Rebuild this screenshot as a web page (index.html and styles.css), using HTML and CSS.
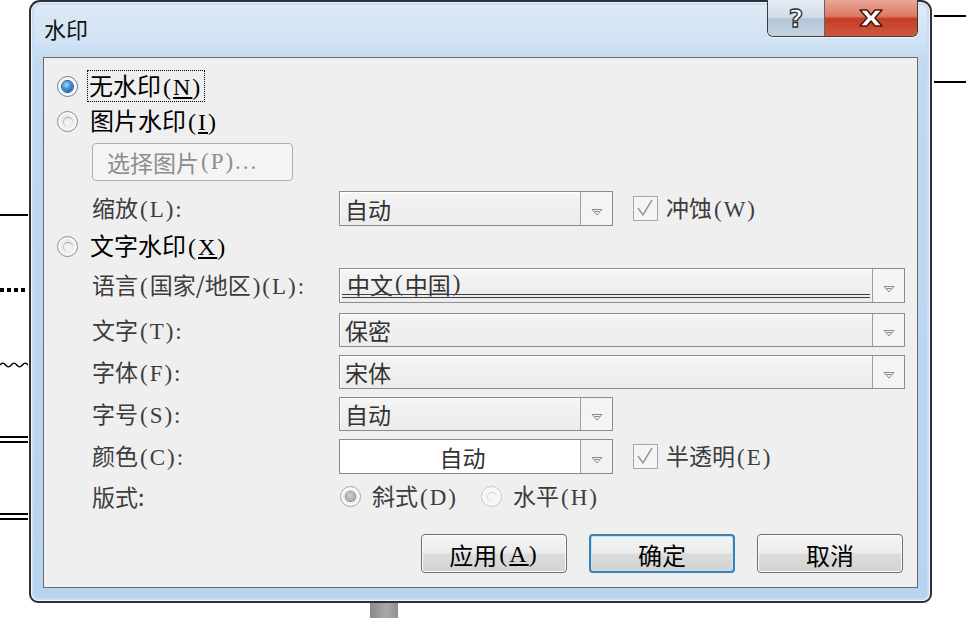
FILE: index.html
```html
<!DOCTYPE html>
<html lang="zh-CN">
<head>
<meta charset="utf-8">
<title>水印</title>
<link rel="stylesheet" href="styles.css">
</head>
<body>
<div class="desk">
  <div class="deco deco-solid" style="top:214px"></div>
  <div class="deco deco-dots"></div>
  <svg class="deco deco-wave" width="30" height="10" viewBox="0 0 30 10"><path d="M0 5 Q3 1 6 5 T12 5 T18 5 T24 5 T30 5" fill="none" stroke="#000" stroke-width="1.5"/></svg>
  <div class="deco deco-double" style="top:436px"></div>
  <div class="deco deco-double" style="top:513px"></div>
  <div class="deco-r" style="top:15px"></div>
  <div class="deco-r" style="top:81px"></div>
  <div class="grey-bar"></div>

  <div class="win">
    <div class="titlebar"><span class="title">水印</span></div>
    <div class="caps">
      <div class="cap help"><span class="q">?</span></div>
      <div class="cap close">
        <svg width="30" height="22" viewBox="0 0 30 22"><path d="M4 3 L11 3 L15 8 L19 3 L26 3 L19 11 L26 19 L19 19 L15 14 L11 19 L4 19 L11 11 Z" fill="#fff" stroke="#4a1a10" stroke-width="1.6" stroke-linejoin="round"/></svg>
      </div>
    </div>
    <div class="client">
      <div class="row radio-row r1">
        <span class="radio on"></span>
        <span class="lbl strong focus">无水印<span class="mn">(<u>N</u>)</span></span>
      </div>
      <div class="row radio-row r2">
        <span class="radio"></span>
        <span class="lbl strong">图片水印<span class="mn">(<u>I</u>)</span></span>
      </div>
      <div class="row indent r3">
        <div class="pick-btn">选择图片<span class="mn">(P)...</span></div>
      </div>
      <div class="row indent r4">
        <span class="lbl field-lbl">缩放<span class="mn">(L):</span></span>
        <div class="combo short"><span class="val">自动</span><span class="drop"><svg width="12" height="8" viewBox="0 0 12 8"><path d="M1 1.5 H11 L6 7 Z M3.5 3.5 H8.5" fill="none" stroke="#8c8c8c" stroke-width="1"/></svg></span></div>
        <div class="check"><svg width="24" height="24" viewBox="0 0 24 24"><path d="M5 12 L10 19 L19 4" fill="none" stroke="#9a9a9a" stroke-width="1.5"/></svg></div>
        <span class="lbl">冲蚀<span class="mn">(W)</span></span>
      </div>
      <div class="row radio-row r5">
        <span class="radio"></span>
        <span class="lbl strong">文字水印<span class="mn">(<u>X</u>)</span></span>
      </div>
      <div class="row indent r6">
        <span class="lbl field-lbl">语言<span class="mn">(</span>国家/地区<span class="mn">)(L):</span></span>
        <div class="combo long"><span class="val lang">中文<span class="mn">(</span>中国<span class="mn">)</span></span><span class="drop"><svg width="12" height="8" viewBox="0 0 12 8"><path d="M1 1.5 H11 L6 7 Z M3.5 3.5 H8.5" fill="none" stroke="#8c8c8c" stroke-width="1"/></svg></span></div>
      </div>
      <div class="row indent r7">
        <span class="lbl field-lbl">文字<span class="mn">(T):</span></span>
        <div class="combo long"><span class="val">保密</span><span class="drop"><svg width="12" height="8" viewBox="0 0 12 8"><path d="M1 1.5 H11 L6 7 Z M3.5 3.5 H8.5" fill="none" stroke="#8c8c8c" stroke-width="1"/></svg></span></div>
      </div>
      <div class="row indent r8">
        <span class="lbl field-lbl">字体<span class="mn">(F):</span></span>
        <div class="combo long"><span class="val">宋体</span><span class="drop"><svg width="12" height="8" viewBox="0 0 12 8"><path d="M1 1.5 H11 L6 7 Z M3.5 3.5 H8.5" fill="none" stroke="#8c8c8c" stroke-width="1"/></svg></span></div>
      </div>
      <div class="row indent r9">
        <span class="lbl field-lbl">字号<span class="mn">(S):</span></span>
        <div class="combo short"><span class="val">自动</span><span class="drop"><svg width="12" height="8" viewBox="0 0 12 8"><path d="M1 1.5 H11 L6 7 Z M3.5 3.5 H8.5" fill="none" stroke="#8c8c8c" stroke-width="1"/></svg></span></div>
      </div>
      <div class="row indent r10">
        <span class="lbl field-lbl">颜色<span class="mn">(C):</span></span>
        <div class="combo short white"><span class="val center">自动</span><span class="drop"><svg width="12" height="8" viewBox="0 0 12 8"><path d="M1 1.5 H11 L6 7 Z M3.5 3.5 H8.5" fill="none" stroke="#8c8c8c" stroke-width="1"/></svg></span></div>
        <div class="check"><svg width="24" height="24" viewBox="0 0 24 24"><path d="M5 12 L10 19 L19 4" fill="none" stroke="#9a9a9a" stroke-width="1.5"/></svg></div>
        <span class="lbl">半透明<span class="mn">(E)</span></span>
      </div>
      <div class="row indent r11">
        <span class="lbl field-lbl">版式:</span>
        <div class="opt first"><span class="radio small dis-on"></span><span class="lbl">斜式<span class="mn">(D)</span></span></div>
        <div class="opt"><span class="radio small dis"></span><span class="lbl">水平<span class="mn">(H)</span></span></div>
      </div>
      <div class="row btn-row">
        <div class="btn">应用<span class="mn">(<u>A</u>)</span></div>
        <div class="btn default">确定</div>
        <div class="btn">取消</div>
      </div>
    </div>
  </div>
</div>
</body>
</html>
```

FILE: styles.css
```css
html, body {
  margin: 0;
  padding: 0;
  background: #ffffff;
}

.desk {
  position: relative;
  width: 966px;
  height: 618px;
  overflow: hidden;
  background: #ffffff;
  font-family: "Noto Sans CJK SC", "Liberation Sans", sans-serif;
}

/* decorative document lines behind the dialog */
.deco {
  position: absolute;
  left: 0;
  width: 28px;
}
.deco-solid {
  height: 0;
  border-top: 2px solid #000;
}
.deco-dots {
  top: 288px;
  height: 4px;
  background: repeating-linear-gradient(to right, #000 0 4px, transparent 4px 7px);
}
.deco-wave {
  top: 360px;
  height: 10px;
}
.deco-double {
  height: 0;
  border-top: 7px double #000;
}
.deco-r {
  position: absolute;
  left: 934px;
  width: 32px;
  height: 0;
  border-top: 2px solid #000;
}
.grey-bar {
  position: absolute;
  left: 370px;
  top: 603px;
  width: 28px;
  height: 15px;
  background: linear-gradient(to right, #8a8a8a, #a9a9a9 60%, #8f8f8f);
}

/* window */
.win {
  position: absolute;
  left: 29px;
  top: 0;
  width: 903px;
  height: 603px;
  box-sizing: border-box;
  border: 2px solid #2e3035;
  border-radius: 11px 11px 9px 9px;
  background: linear-gradient(to bottom, #dfeaf6 0px, #d0e2f4 40px, #c1d9f1 60px, #b6d3f0 100%);
  box-shadow: inset 0 0 0 1px #eef5fc, inset 0 0 0 3px #c8ddf2;
  display: flex;
  flex-direction: column;
}

.titlebar {
  height: 55px;
  display: flex;
  align-items: center;
  padding-left: 13px;
  padding-bottom: 4px;
  box-sizing: border-box;
}
.title {
  font-size: 22px;
  color: #111;
}

.caps {
  position: absolute;
  top: -2px;
  right: 12px;
  display: flex;
  height: 36px;
  border: 1px solid #3a3a3a;
  border-top: none;
  border-radius: 0 0 6px 6px;
  overflow: hidden;
  box-shadow: 0 1px 0 #f2f7fc;
}
.cap {
  display: flex;
  align-items: center;
  justify-content: center;
}
.help {
  width: 56px;
  background: linear-gradient(to bottom, #e4ecf4 0%, #cfdbe7 50%, #b3c5d6 51%, #c4d3e1 100%);
  border-right: 1px solid #5a6470;
}
.help .q {
  font-family: "DejaVu Sans", sans-serif;
  font-weight: bold;
  font-size: 25px;
  color: #fff;
  -webkit-text-stroke: 1.3px #2a2f36;
  line-height: 1;
}
.close {
  width: 92px;
  background: linear-gradient(to bottom, #e9a797 0%, #dc7a64 45%, #c63c26 52%, #d0573e 100%);
}

/* client area */
.client {
  margin: 0 12px;
  height: 531px;
  box-sizing: border-box;
  border: 1px solid #6a6a6a;
  background: #f0eff0;
  display: flex;
  flex-direction: column;
  font-size: 23px;
  color: #3c3c3c;
}

.row {
  display: flex;
  align-items: center;
  flex: none;
}
.radio-row {
  padding-left: 13px;
  height: 28px;
}
.indent {
  padding-left: 48px;
}

.r1 { margin-top: 14px; }
.r2 { margin-top: 7px; }
.r3 { margin-top: 8px; height: 38px; }
.r4 { margin-top: 10px; height: 35px; }
.r5 { margin-top: 6px; }
.r6 { margin-top: 8px; height: 35px; }
.r7 { margin-top: 10px; height: 34px; }
.r8 { margin-top: 8px; height: 34px; }
.r9 { margin-top: 8px; height: 34px; }
.r10 { margin-top: 8px; height: 35px; }
.r11 { margin-top: 8px; height: 28px; }
.btn-row {
  margin-top: 24px;
  justify-content: flex-end;
  padding-right: 14px;
  gap: 22px;
}

.lbl {
  line-height: 28px;
  white-space: nowrap;
}
.lbl.strong {
  color: #000;
  margin-left: 12px;
  font-size: 24px;
}
.focus {
  outline: 1px dotted #000;
  outline-offset: 0;
  padding: 0 2px 0 1px;
  margin-left: 10px !important;
}
.field-lbl {
  width: 247px;
  flex: none;
}

.mn {
  font-family: "Liberation Serif", "Noto Sans CJK SC", serif;
  font-size: 1em;
  letter-spacing: 2px;
  padding-left: 2px;
}
.mn u {
  text-underline-offset: 2px;
}

/* radios */
.radio {
  width: 21px;
  height: 21px;
  flex: none;
  box-sizing: border-box;
  border-radius: 50%;
  border: 1px solid #8d8d8d;
  background: radial-gradient(circle at 50% 60%, #f6f6f6 0%, #e9e9e9 55%, #d9d9d9 100%);
  box-shadow: inset 0 0 0 2px #fbfbfb;
  position: relative;
}
.radio::after {
  content: "";
  position: absolute;
  left: 5px;
  top: 5px;
  width: 9px;
  height: 9px;
  border-radius: 50%;
  border-top: 1px solid #a6a6a6;
  border-left: 1px solid #bdbdbd;
}
.radio.on {
  border-color: #6f7f8f;
  background: radial-gradient(circle at 50% 50%, #fff 0%, #e6e6e6 100%);
}
.radio.on::after {
  left: 4px;
  top: 4px;
  width: 11px;
  height: 11px;
  border: none;
  background: radial-gradient(circle at 40% 35%, #a8dcff 0%, #3e94dd 40%, #0e4f9a 100%);
  box-shadow: 0 0 0 1px #244f80;
}
.radio.dis-on {
  border-color: #a8a8a8;
}
.radio.dis-on::after {
  left: 5px;
  top: 5px;
  width: 9px;
  height: 9px;
  border: none;
  background: radial-gradient(circle at 45% 40%, #d0d0d0 0%, #9e9e9e 100%);
  box-shadow: 0 0 0 1px #888;
}
.radio.dis {
  border-color: #c6c6c6;
  background: #f5f5f5;
}
.radio.dis::after {
  border-top-color: #d0d0d0;
  border-left-color: #dadada;
}

.opt {
  display: flex;
  align-items: center;
  gap: 11px;
  flex: none;
}
.opt.first {
  width: 141px;
  margin-left: 1px;
}

/* picture button */
.pick-btn {
  width: 201px;
  height: 38px;
  box-sizing: border-box;
  border: 1px solid #adadad;
  border-radius: 4px;
  background: #f4f4f4;
  color: #8d8d8d;
  display: flex;
  align-items: center;
  padding-left: 14px;
  font-size: 23px;
}

/* combos */
.combo {
  height: 100%;
  box-sizing: border-box;
  border: 1px solid #8b8b8b;
  background: linear-gradient(to bottom, #f7f7f7 0%, #f1f1f1 30%, #ececec 100%);
  box-shadow: inset 1px 1px 0 #ffffff;
  display: flex;
  flex: none;
}
.combo.short { width: 274px; }
.combo.long { width: 566px; }
.combo.white {
  background: #ffffff;
}
.combo .val {
  flex: 1;
  display: flex;
  align-items: center;
  padding-left: 5px;
  color: #333;
  font-size: 23px;
  position: relative;
}
.combo .val.center {
  justify-content: center;
}
.combo .val.lang {
  padding-left: 7px;
  align-items: flex-start;
  line-height: 30px;
}
.combo .val.lang::after {
  content: "";
  position: absolute;
  left: 2px;
  right: 2px;
  bottom: 4px;
  height: 0;
  border-top: 4px double #3e3e3e;
}
.combo .drop {
  width: 32px;
  flex: none;
  border-left: 1px solid #9d9d9d;
  background: #f4f4f4;
  display: flex;
  align-items: center;
  justify-content: center;
  padding-top: 6px;
  box-sizing: border-box;
}
.combo.white .drop {
  background: #f2f2f2;
}

/* check boxes */
.check {
  width: 25px;
  height: 25px;
  box-sizing: border-box;
  border: 1px solid #a5a5a5;
  background: #f5f5f5;
  margin-left: 20px;
  margin-right: 8px;
  flex: none;
  display: flex;
}
.check svg {
  margin: -1px 0 0 -1px;
}

/* buttons */
.btn {
  width: 146px;
  height: 39px;
  box-sizing: border-box;
  border: 1px solid #707070;
  border-radius: 4px;
  background: linear-gradient(to bottom, #f4f4f4 0%, #ececec 48%, #dcdcdc 52%, #d2d2d2 100%);
  box-shadow: inset 0 0 0 1px #fbfbfb;
  color: #000;
  font-size: 24px;
  display: flex;
  align-items: center;
  justify-content: center;
  padding-top: 2px;
}
.btn.default {
  border: 2px solid #3c80b8;
  box-shadow: inset 0 0 0 1px #bfe3f7;
}
```
